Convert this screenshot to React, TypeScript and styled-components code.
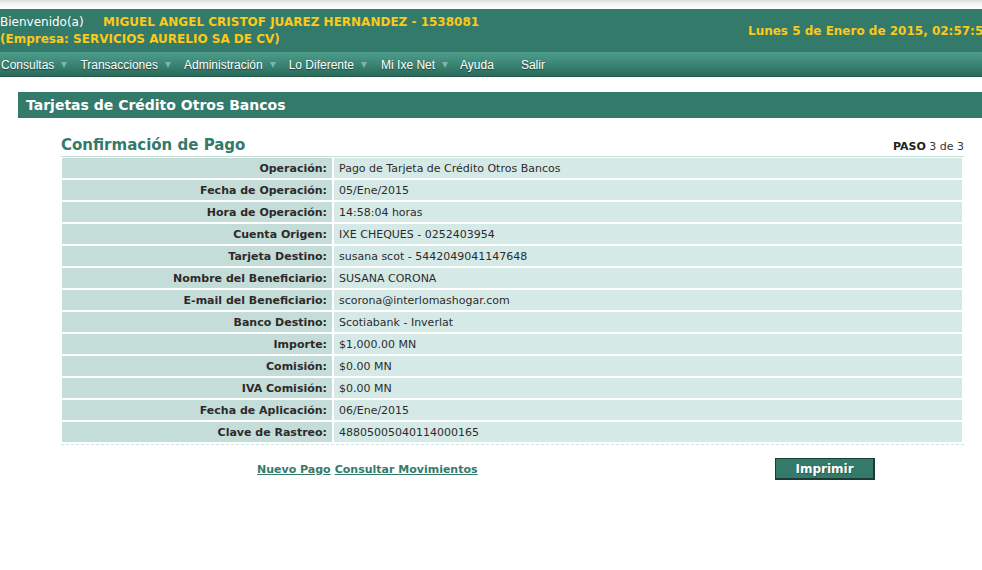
import React from "react";
import styled, { createGlobalStyle } from "styled-components";

const GREEN = "#337a6b";

const Global = createGlobalStyle`
  html, body { margin: 0; padding: 0; background: #fff; }
  body { font-family: "DejaVu Sans", Verdana, sans-serif; overflow: hidden; }
`;

const Page = styled.div`
  width: 982px;
  overflow: hidden;
`;

const TopStrip = styled.div`
  height: 9px;
  background: linear-gradient(#dcdcdc, #f6f6f6 45%, #fff);
`;

const Header = styled.header`
  height: 43px;
  background: ${GREEN};
  display: flex;
  align-items: center;
  overflow: hidden;
  white-space: nowrap;
`;

const Welcome = styled.div`
  flex: 0 0 748px;
  font-size: 12px;
  line-height: 17px;
  padding-top: 1px;
`;

const Line = styled.div`
  display: flex;
`;

const Plain = styled.span`
  color: #fff;
  width: 103px;
`;

const Yellow = styled.span`
  color: #fcc917;
  font-weight: bold;
`;

const DateText = styled.div`
  flex-shrink: 0;
  color: #fcc917;
  font-weight: bold;
  font-size: 12px;
  padding-top: 1px;
`;

const Nav = styled.nav`
  height: 25px;
  box-sizing: border-box;
  background: linear-gradient(#4f9d8c, #3b8574 50%, #2a6a5a);
  border-bottom: 1px solid #24594c;
  display: flex;
  align-items: center;
  padding: 2px 0 0 1px;
`;

const NavItem = styled.span<{ $gap: number }>`
  font-family: "Liberation Sans", Arial, sans-serif;
  font-size: 12px;
  color: #fff;
  text-shadow: 0 1px 1px rgba(0, 0, 0, 0.45);
  display: flex;
  align-items: center;
  margin-right: ${(p) => p.$gap}px;
`;

const Arrow = styled.span`
  width: 0;
  height: 0;
  border-left: 3px solid transparent;
  border-right: 3px solid transparent;
  border-top: 6px solid #7db4a6;
  margin-left: 7px;
`;

const Content = styled.main`
  padding: 15px 0 0 18px;
`;

const SectionBar = styled.div`
  height: 26px;
  background: ${GREEN};
  color: #fff;
  font-weight: bold;
  font-size: 14px;
  display: flex;
  align-items: center;
  padding-left: 8px;
`;

const Panel = styled.section`
  margin: 17px 18px 0 43px;
`;

const TitleRow = styled.div`
  display: flex;
  justify-content: space-between;
  align-items: flex-end;
  border-bottom: 1px solid #c5ddd7;
  padding-bottom: 1px;
`;

const Title = styled.h2`
  margin: 0;
  font-size: 15px;
  color: ${GREEN};
  font-weight: bold;
  line-height: 20px;
`;

const Step = styled.div`
  font-size: 11px;
  color: #333;
  padding-bottom: 2px;
  b { color: #222; }
`;

const Table = styled.div`
  display: grid;
  grid-template-columns: 270px 1fr;
  gap: 2px;
  padding: 1px 2px 2px 1px;
  border-bottom: 1px dashed #cbe5e0;
`;

const Label = styled.div`
  background: #c5ddd8;
  height: 20px;
  display: flex;
  align-items: center;
  justify-content: flex-end;
  padding-right: 5px;
  font-size: 11px;
  font-weight: bold;
  color: #2e2a2a;
`;

const Value = styled.div`
  background: #d5eae6;
  height: 20px;
  display: flex;
  align-items: center;
  padding-left: 5px;
  font-size: 11px;
  color: #2e2a2a;
`;

const Actions = styled.div`
  display: flex;
  align-items: center;
  margin-top: 13px;
  padding-left: 196px;
`;

const Link = styled.a`
  color: ${GREEN};
  font-weight: bold;
  font-size: 11px;
  text-decoration: underline;
  margin-right: 4px;
  cursor: pointer;
`;

const Button = styled.button`
  margin-left: auto;
  margin-right: 89px;
  width: 100px;
  height: 22px;
  background: ${GREEN};
  border: 1px solid #1c3b34;
  border-right-width: 2px;
  border-bottom-width: 2px;
  color: #fff;
  font-family: "DejaVu Sans", Verdana, sans-serif;
  font-weight: bold;
  font-size: 12px;
  text-shadow: 1px 1px 0 rgba(0, 0, 0, 0.25);
  padding: 0;
  cursor: pointer;
`;

const rows: [string, string][] = [
  ["Operación:", "Pago de Tarjeta de Crédito Otros Bancos"],
  ["Fecha de Operación:", "05/Ene/2015"],
  ["Hora de Operación:", "14:58:04 horas"],
  ["Cuenta Origen:", "IXE CHEQUES - 0252403954"],
  ["Tarjeta Destino:", "susana scot - 5442049041147648"],
  ["Nombre del Beneficiario:", "SUSANA CORONA"],
  ["E-mail del Beneficiario:", "scorona@interlomashogar.com"],
  ["Banco Destino:", "Scotiabank - Inverlat"],
  ["Importe:", "$1,000.00 MN"],
  ["Comisión:", "$0.00 MN"],
  ["IVA Comisión:", "$0.00 MN"],
  ["Fecha de Aplicación:", "06/Ene/2015"],
  ["Clave de Rastreo:", "48805005040114000165"],
];

const menu: [string, boolean, number][] = [
  ["Consultas", true, 13],
  ["Transacciones", true, 13],
  ["Administración", true, 13],
  ["Lo Diferente", true, 14],
  ["Mi Ixe Net", true, 12],
  ["Ayuda", false, 27],
  ["Salir", false, 0],
];

export default function App() {
  return (
    <Page>
      <Global />
      <TopStrip />
      <Header>
        <Welcome>
          <Line>
            <Plain>Bienvenido(a)</Plain>
            <Yellow>MIGUEL ANGEL CRISTOF JUAREZ HERNANDEZ - 1538081</Yellow>
          </Line>
          <Line>
            <Yellow>(Empresa: SERVICIOS AURELIO SA DE CV)</Yellow>
          </Line>
        </Welcome>
        <DateText>Lunes 5 de Enero de 2015, 02:57:58 hrs</DateText>
      </Header>
      <Nav>
        {menu.map(([label, arrow, gap]) => (
          <NavItem key={label} $gap={gap}>
            {label}
            {arrow && <Arrow />}
          </NavItem>
        ))}
      </Nav>
      <Content>
        <SectionBar>Tarjetas de Crédito Otros Bancos</SectionBar>
        <Panel>
          <TitleRow>
            <Title>Confirmación de Pago</Title>
            <Step>
              <b>PASO</b> 3 de 3
            </Step>
          </TitleRow>
          <Table>
            {rows.map(([l, v]) => (
              <React.Fragment key={l}>
                <Label>{l}</Label>
                <Value>{v}</Value>
              </React.Fragment>
            ))}
          </Table>
          <Actions>
            <Link>Nuevo Pago</Link>
            <Link>Consultar Movimientos</Link>
            <Button>Imprimir</Button>
          </Actions>
        </Panel>
      </Content>
    </Page>
  );
}
